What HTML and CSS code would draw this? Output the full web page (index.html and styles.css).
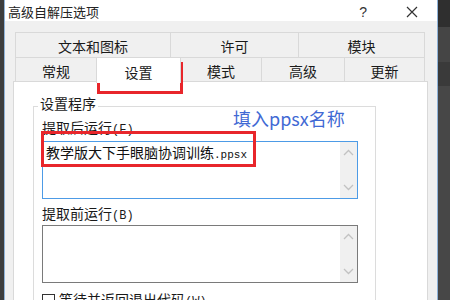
FILE: index.html
```html
<!DOCTYPE html>
<html lang="zh-CN">
<head>
    <meta charset="UTF-8">
    <title>高级自解压选项</title>
    <link rel="stylesheet" href="styles.css">
</head>
<body>
    <div class="screen">
        <div class="edge-left"></div>
        <div class="window">
            <div class="titlebar">
                <span class="title">高级自解压选项</span>
                <span class="help">?</span>
                <svg class="close" width="12" height="12" viewBox="0 0 12 12">
                    <path d="M1 1 L11 11 M11 1 L1 11" stroke="#333" stroke-width="1.2" fill="none"/>
                </svg>
            </div>
            <div class="dialog">
                <div class="tabs">
                    <div class="tab-row row-top">
                        <div class="tab w155">文本和图标</div>
                        <div class="tab w128">许可</div>
                        <div class="tab w127">模块</div>
                    </div>
                    <div class="tab-row row-bottom">
                        <div class="tab w82">常规</div>
                        <div class="tab w84 active">设置</div>
                        <div class="tab w81">模式</div>
                        <div class="tab w83">高级</div>
                        <div class="tab w80">更新</div>
                    </div>
                </div>
                <div class="panel">
                    <fieldset class="group">
                        <legend>设置程序</legend>
                        <div class="field-label first">提取后运行<span class="key">(F)</span></div>
                        <div class="textbox focused">
                            <div class="textbox-text">教学版大下手眼脑协调训练<span class="mono">.ppsx</span></div>
                            <div class="scrollbar">
                                <svg width="11" height="7" viewBox="0 0 11 7"><path d="M1 6 L5.5 1.5 L10 6" stroke="#c2c2c2" stroke-width="1.3" fill="none"/></svg>
                                <svg width="11" height="7" viewBox="0 0 11 7"><path d="M1 1 L5.5 5.5 L10 1" stroke="#c2c2c2" stroke-width="1.3" fill="none"/></svg>
                            </div>
                        </div>
                        <div class="field-label second">提取前运行<span class="key">(B)</span></div>
                        <div class="textbox">
                            <div class="textbox-text"></div>
                            <div class="scrollbar">
                                <svg width="11" height="7" viewBox="0 0 11 7"><path d="M1 6 L5.5 1.5 L10 6" stroke="#c2c2c2" stroke-width="1.3" fill="none"/></svg>
                                <svg width="11" height="7" viewBox="0 0 11 7"><path d="M1 1 L5.5 5.5 L10 1" stroke="#c2c2c2" stroke-width="1.3" fill="none"/></svg>
                            </div>
                        </div>
                        <label class="check-row">
                            <span class="checkbox"></span>
                            <span>等待并返回退出代码<span class="key">(W)</span></span>
                        </label>
                    </fieldset>
                </div>
            </div>
        </div>
        <div class="edge-right"></div>

        <!-- annotations drawn over the screenshot -->
        <div class="mark mark-tab"></div>
        <div class="mark mark-field"></div>
        <div class="note">填入ppsx名称</div>
    </div>
</body>
</html>
```

FILE: styles.css
```css
body {
    margin: 0;
    padding: 0;
    overflow: hidden;
    font-family: "Noto Sans CJK SC", "Noto Sans", sans-serif;
    color: #1a1a1a;
}
.screen {
    position: relative;
    display: flex;
    width: 450px;
    height: 300px;
    overflow: hidden;
}
.edge-left {
    width: 4px;
    background: #3d3d3d;
}
.edge-right {
    width: 12px;
    background: linear-gradient(#2f2f2f 0, #2f2f2f 27px, #454545 27px, #454545 62px, #3a3a3a 62px, #3a3a3a 86px, #474747 86px, #474747 300px);
}
.window {
    width: 432px;
    border-left: 1px solid #8fb3d9;
    border-right: 1px solid #8fb3d9;
    background: #f0f0f0;
    display: flex;
    flex-direction: column;
}
.titlebar {
    height: 27px;
    box-sizing: border-box;
    padding-top: 2px;
    background: #fff;
    display: flex;
    align-items: center;
    padding-left: 3px;
    font-size: 13px;
}
.title {
    flex: 1;
    color: #222;
}
.help {
    font-family: "Liberation Sans", sans-serif;
    font-size: 14px;
    color: #333;
    margin-right: 39px;
}
.close {
    margin-right: 19px;
}
.dialog {
    padding: 11px 9px 0 8px;
}
.tabs {
    margin: 0 3px 0 2px;
}
.tab-row {
    display: flex;
    height: 25px;
}
.tab {
    box-sizing: border-box;
    border: 1px solid #d9d9d9;
    margin-left: -1px;
    display: flex;
    align-items: center;
    justify-content: center;
    font-size: 14px;
    background: #f0f0f0;
    padding-top: 2px;
}
.tab:first-child {
    margin-left: 0;
}
.row-top .tab {
    border-bottom: none;
}
.tab.active {
    background: #fff;
    border-bottom: none;
    position: relative;
    z-index: 1;
    height: 26px;
}
.w155 { width: 156px; }
.w128 { width: 129px; }
.w127 { width: 127px; }
.w82 { width: 82px; }
.w84 { width: 85px; }
.w81 { width: 82px; }
.w83 { width: 84px; }
.w80 { width: 81px; }
.panel {
    background: #fff;
    border: 1px solid #d9d9d9;
    border-bottom: none;
    height: 220px;
    padding: 0 50px 0 19px;
    margin-top: -1px;
}
.group {
    margin: 0;
    margin-top: 11px;
    border: 1px solid #dcdcdc;
    border-bottom: none;
    padding: 0 17px 0 8px;
    width: 343px;
    box-sizing: border-box;
    height: 220px;
}
.group legend {
    font-size: 14px;
    line-height: 20px;
    padding: 0 2px 6px 2px;
    margin-left: -4px;
}
.field-label {
    font-size: 14px;
    line-height: 16px;
}
.field-label.first {
    margin-top: 0;
    margin-bottom: 3px;
}
.field-label.second {
    margin-top: 6px;
    margin-bottom: 1px;
}
.key {
    font-family: "Liberation Mono", monospace;
    font-size: 12px;
}
.textbox {
    display: flex;
    height: 58px;
    box-sizing: border-box;
    border: 1px solid #7a7a7a;
    background: #fff;
}
.textbox.focused {
    border-color: #4d9be6;
}
.textbox-text {
    flex: 1;
    padding: 1px 3px;
    font-size: 14px;
    line-height: 18px;
    color: #111;
}
.mono {
    font-family: "Liberation Mono", monospace;
    font-size: 11px;
}
.scrollbar {
    width: 17px;
    background: #f0f0f0;
    display: flex;
    flex-direction: column;
    justify-content: space-between;
    align-items: center;
    padding: 7px 0 7px;
}
.check-row {
    display: flex;
    align-items: center;
    gap: 4px;
    margin-top: 8px;
    font-size: 14px;
    line-height: 16px;
}
.checkbox {
    width: 11px;
    height: 11px;
    border: 1px solid #333;
    background: #fff;
}
.mark {
    position: absolute;
    border: 3px solid #e8262b;
    box-sizing: border-box;
}
.mark-tab {
    left: 97px;
    top: 62px;
    width: 86px;
    height: 32px;
}
.mark-field {
    left: 41px;
    top: 131px;
    width: 215px;
    height: 36px;
}
.note {
    position: absolute;
    left: 233px;
    top: 106px;
    font-size: 18px;
    line-height: 24px;
    color: #4169d4;
}
```
